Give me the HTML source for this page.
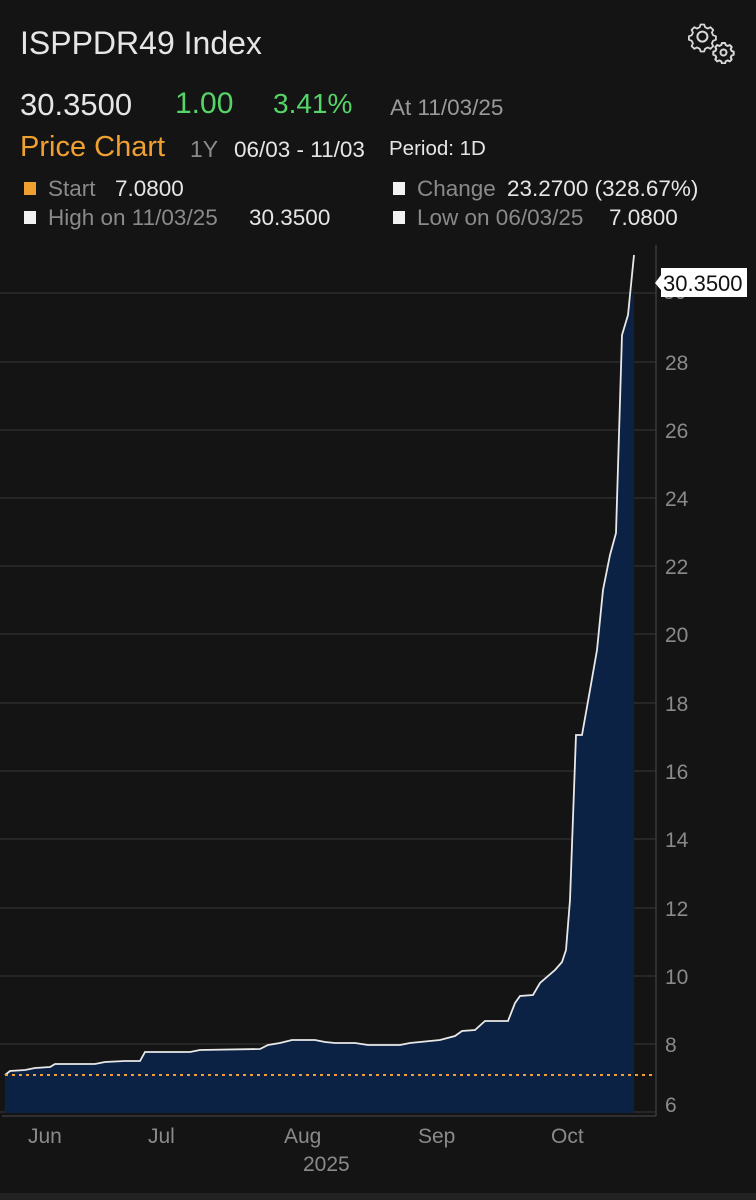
<!DOCTYPE html>
<html><head><meta charset="utf-8"><style>
body{margin:0;width:756px;height:1200px;background:#141414;overflow:hidden;font-family:"Liberation Sans",sans-serif;position:relative}
.t{position:absolute;white-space:nowrap}
.sq{position:absolute;width:12px;height:13px;background:#f2f2f2}
</style></head><body>
<div class="t" style="left:20px;top:25px;font-size:32px;color:#e6e6e6">ISPPDR49 Index</div>
<svg style="position:absolute;left:688px;top:22px" width="50" height="42" viewBox="0 0 50 42" fill="none" stroke="#d8d8d8" stroke-width="2" stroke-linejoin="round">
<path d="M14 5h4l1 3 3 1.5 3-1.5 3 3-1.5 3 1.5 3 3 1v4l-3 1-1.5 3 1.5 3-3 3-3-1.5-3 1.5-1 3h-4l-1-3-3-1.5-3 1.5-3-3 1.5-3-1.5-3-3-1v-4l3-1 1.5-3-1.5-3 3-3 3 1.5 3-1.5z" transform="translate(0,-2) scale(0.9)"/>
<circle cx="14.4" cy="14.6" r="5"/>
<path d="M34 21h3l.7 2 2 1 2-1 2 2-1 2 1 2 2 .7v3l-2 .7-1 2 1 2-2 2-2-1-2 1-.7 2h-3l-.7-2-2-1-2 1-2-2 1-2-1-2-2-.7v-3l2-.7 1-2-1-2 2-2 2 1 2-1z"/>
<circle cx="35.5" cy="30.5" r="3"/></svg>
<div class="t" style="left:20px;top:87px;font-size:31px;color:#e6e6e6">30.3500</div>
<div class="t" style="left:175px;top:87px;font-size:30px;color:#55d468">1.00</div>
<div class="t" style="left:273px;top:88px;font-size:28px;color:#55d468">3.41%</div>
<div class="t" style="left:390px;top:95px;font-size:22.5px;color:#9a9a9a">At 11/03/25</div>
<div class="t" style="left:20px;top:131px;font-size:29px;color:#f0a030">Price Chart</div>
<div class="t" style="left:190px;top:136px;font-size:23px;color:#8a8a8a">1Y</div>
<div class="t" style="left:234px;top:137px;font-size:22.5px;color:#e6e6e6">06/03 - 11/03</div>
<div class="t" style="left:389px;top:137px;font-size:20.5px;color:#e6e6e6">Period: 1D</div>
<div class="sq" style="left:24px;top:182px;background:#f0a030"></div>
<div class="sq" style="left:24px;top:211px"></div>
<div class="sq" style="left:393px;top:182px"></div>
<div class="sq" style="left:393px;top:211px"></div>
<div class="t" style="left:48px;top:176px;font-size:22.5px;color:#8a8a8a">Start</div>
<div class="t" style="left:115px;top:176px;font-size:22.5px;color:#e6e6e6">7.0800</div>
<div class="t" style="left:417px;top:176px;font-size:22.5px;color:#8a8a8a">Change</div>
<div class="t" style="left:507px;top:176px;font-size:22.5px;color:#e6e6e6">23.2700 (328.67%)</div>
<div class="t" style="left:48px;top:205px;font-size:22.5px;color:#8a8a8a">High on 11/03/25</div>
<div class="t" style="left:249px;top:205px;font-size:22.5px;color:#e6e6e6">30.3500</div>
<div class="t" style="left:417px;top:205px;font-size:22.5px;color:#8a8a8a">Low on 06/03/25</div>
<div class="t" style="left:609px;top:205px;font-size:22.5px;color:#e6e6e6">7.0800</div>
<svg style="position:absolute;left:0;top:0" width="756" height="1200">
<g stroke="#2c2c2c" stroke-width="1.5">
<line x1="0" y1="293" x2="656" y2="293"/><line x1="0" y1="362" x2="656" y2="362"/><line x1="0" y1="430" x2="656" y2="430"/><line x1="0" y1="498" x2="656" y2="498"/><line x1="0" y1="566" x2="656" y2="566"/><line x1="0" y1="634" x2="656" y2="634"/><line x1="0" y1="703" x2="656" y2="703"/><line x1="0" y1="771" x2="656" y2="771"/><line x1="0" y1="839" x2="656" y2="839"/><line x1="0" y1="908" x2="656" y2="908"/><line x1="0" y1="976" x2="656" y2="976"/><line x1="0" y1="1044" x2="656" y2="1044"/><line x1="0" y1="1112" x2="656" y2="1112"/>
</g>
<line x1="656" y1="245" x2="656" y2="1116" stroke="#3a3a3a" stroke-width="1.5"/>
<line x1="2" y1="1116" x2="656" y2="1116" stroke="#3a3a3a" stroke-width="1.5"/>
<path d="M5 1075L10 1071L25 1070L35 1068L50 1067L55 1064L95 1064L105 1062L125 1061L140 1061L145 1052L190 1052L200 1050L260 1049L268 1045L280 1043L292 1040L315 1040L325 1042L335 1043L355 1043L368 1045L400 1045L410 1043L440 1040L455 1036L462 1031L475 1030L485 1021L508 1021L515 1003L520 996L533 995L540 983L555 970L562 962L566 950L570 900L576 735L582 735L590 690L597 650L603 590L610 555L616 533L622 335L628 315L634 285L634 1113L5 1113Z" fill="#0b2244"/>
<path d="M5 1075L10 1071L25 1070L35 1068L50 1067L55 1064L95 1064L105 1062L125 1061L140 1061L145 1052L190 1052L200 1050L260 1049L268 1045L280 1043L292 1040L315 1040L325 1042L335 1043L355 1043L368 1045L400 1045L410 1043L440 1040L455 1036L462 1031L475 1030L485 1021L508 1021L515 1003L520 996L533 995L540 983L555 970L562 962L566 950L570 900L576 735L582 735L590 690L597 650L603 590L610 555L616 533L622 335L628 315L634 255" fill="none" stroke="#e8e8e8" stroke-width="1.8"/>
<line x1="5" y1="1075" x2="656" y2="1075" stroke="#f0a030" stroke-width="2" stroke-dasharray="3 4"/>
<g font-family="Liberation Sans,sans-serif" font-size="21" fill="#8a8a8a">
<text x="665" y="370">28</text><text x="665" y="438">26</text><text x="665" y="506">24</text><text x="665" y="574">22</text><text x="665" y="642">20</text><text x="665" y="711">18</text><text x="665" y="779">16</text><text x="665" y="847">14</text><text x="665" y="916">12</text><text x="665" y="984">10</text><text x="665" y="1052">8</text><text x="665" y="1112">6</text>
<text x="28" y="1143">Jun</text><text x="148" y="1143">Jul</text><text x="284" y="1143">Aug</text><text x="418" y="1143">Sep</text><text x="551" y="1143">Oct</text><text x="303" y="1171">2025</text>
</g>
<text x="663" y="299" font-family="Liberation Sans,sans-serif" font-size="21" fill="#8a8a8a">30</text>
<path d="M655 283L661 275V268H747V297H661V290Z" fill="#fff"/>
<text x="663" y="291" font-family="Liberation Sans,sans-serif" font-size="22" fill="#111">30.3500</text>
<rect x="0" y="1193" width="756" height="7" fill="#222"/>
</svg>
</body></html>
